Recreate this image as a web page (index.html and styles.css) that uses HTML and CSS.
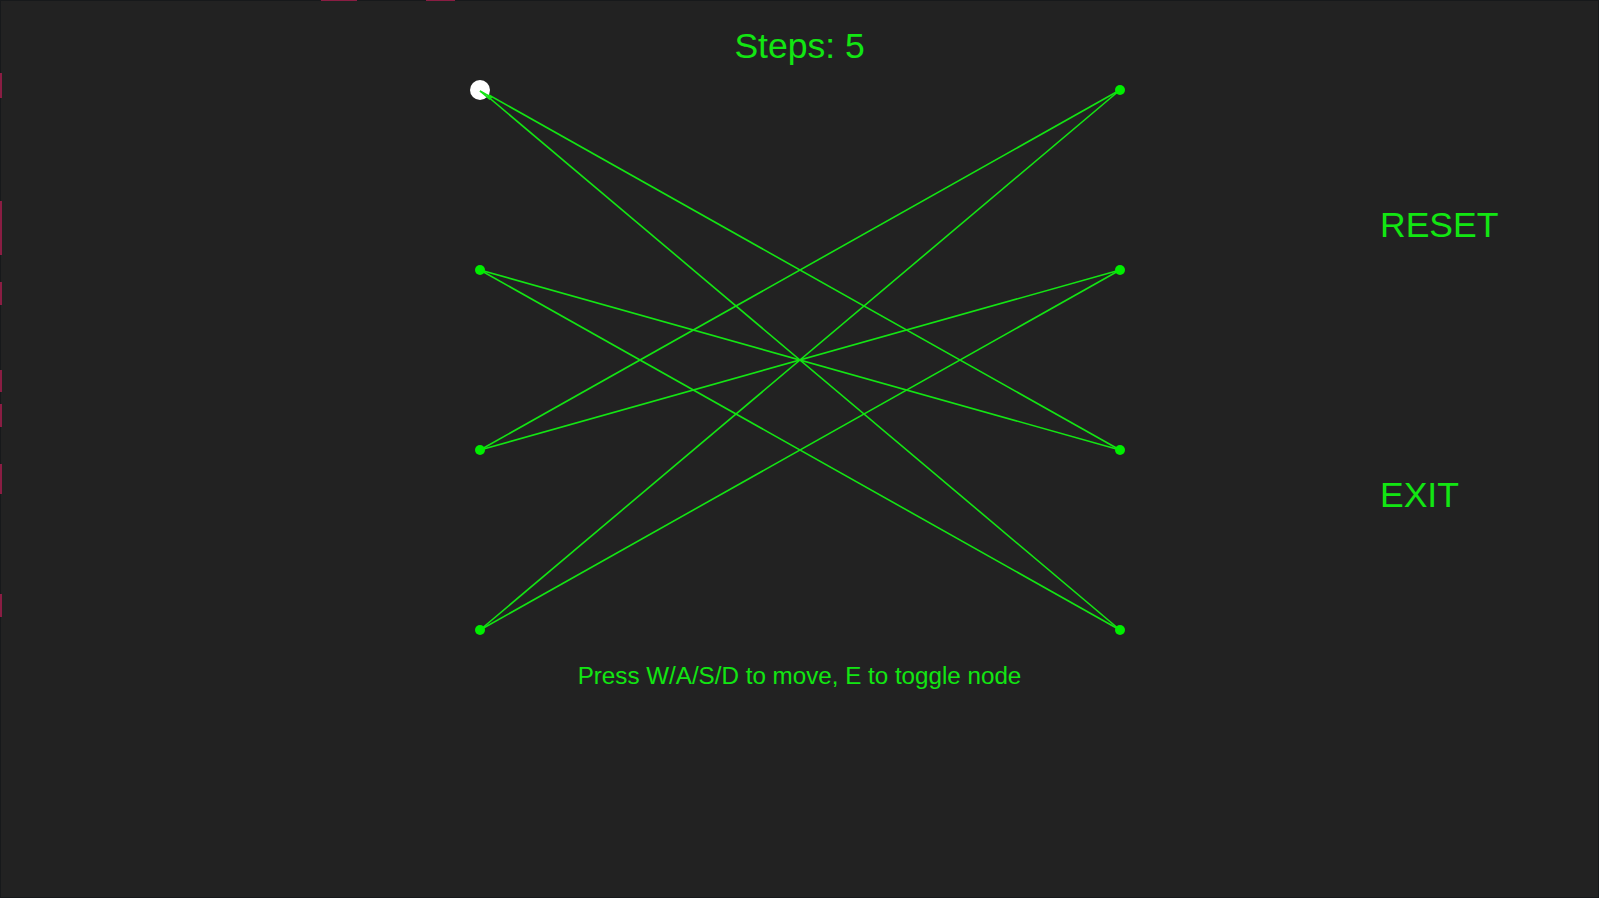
FILE: index.html
```html
<!DOCTYPE html>
<html lang="en">
<head>
<meta charset="utf-8">
<title>Steps</title>
<link rel="stylesheet" href="styles.css">
</head>
<body>
<div class="screen">
  <span class="mark mark-top" style="left:320px;width:36px"></span>
  <span class="mark mark-top" style="left:425px;width:29px"></span>
  <span class="mark mark-left" style="top:72px;height:25px"></span>
  <span class="mark mark-left" style="top:200px;height:54px"></span>
  <span class="mark mark-left" style="top:281px;height:23px"></span>
  <span class="mark mark-left" style="top:369px;height:22px"></span>
  <span class="mark mark-left" style="top:403px;height:23px"></span>
  <span class="mark mark-left" style="top:463px;height:30px"></span>
  <span class="mark mark-left" style="top:593px;height:23px"></span>

  <h1 class="title">Steps: 5</h1>

  <div class="middle">
    <svg class="board" width="660" height="560" viewBox="470 80 660 560">
      <g class="edges">
        <line x1="480" y1="90" x2="1120" y2="450"/>
        <line x1="480" y1="90" x2="1120" y2="630"/>
        <line x1="480" y1="270" x2="1120" y2="450"/>
        <line x1="480" y1="270" x2="1120" y2="630"/>
        <line x1="480" y1="450" x2="1120" y2="90"/>
        <line x1="480" y1="450" x2="1120" y2="270"/>
        <line x1="480" y1="630" x2="1120" y2="90"/>
        <line x1="480" y1="630" x2="1120" y2="270"/>
      </g>
      <circle class="cursor" cx="480" cy="90" r="10"/>
      <g class="edges">
        <line x1="480" y1="91" x2="492" y2="97.8"/>
        <line x1="480" y1="91" x2="490" y2="99.4"/>
      </g>
      <g class="nodes">
        <circle cx="480" cy="270" r="5"/>
        <circle cx="480" cy="450" r="5"/>
        <circle cx="480" cy="630" r="5"/>
        <circle cx="1120" cy="90" r="5"/>
        <circle cx="1120" cy="270" r="5"/>
        <circle cx="1120" cy="450" r="5"/>
        <circle cx="1120" cy="630" r="5"/>
      </g>
    </svg>

    <nav class="menu">
      <div class="menu-item">RESET</div>
      <div class="menu-item">EXIT</div>
    </nav>
  </div>

  <p class="hint">Press W/A/S/D to move, E to toggle node</p>
</div>
</body>
</html>
```

FILE: styles.css
```css
* { box-sizing: border-box; }

html, body {
  margin: 0;
  padding: 0;
  background: #222222;
}

body {
  font-family: "Liberation Sans", Arial, sans-serif;
  color: #12e612;
}

.screen {
  position: relative;
  width: 1599px;
  height: 898px;
  background: #222222;
  border: 1px solid #17191b;
  display: flex;
  flex-direction: column;
  overflow: visible;
}

.mark {
  position: absolute;
  background: #8a1d43;
}
.mark-top { top: -1px; height: 1px; }
.mark-left { left: -1px; width: 2px; }

.title {
  margin: 25px 0 0;
  font-size: 35.5px;
  line-height: 40px;
  font-weight: normal;
  text-align: center;
}

.middle {
  display: flex;
  align-items: flex-start;
  margin-top: 14px;
}

.board {
  display: block;
  margin-left: 469px;
  flex: none;
}

.edges line {
  stroke: #14e414;
  stroke-width: 1.6;
}

.cursor { fill: #ffffff; }

.nodes circle { fill: #00ee00; }

.menu {
  margin-left: 250px;
  padding-top: 125px;
  display: flex;
  flex-direction: column;
  gap: 230px;
}

.menu-item {
  font-size: 35.5px;
  line-height: 40px;
}

.hint {
  margin: 22px 0 0;
  font-size: 24.2px;
  line-height: 28px;
  text-align: center;
}
```
